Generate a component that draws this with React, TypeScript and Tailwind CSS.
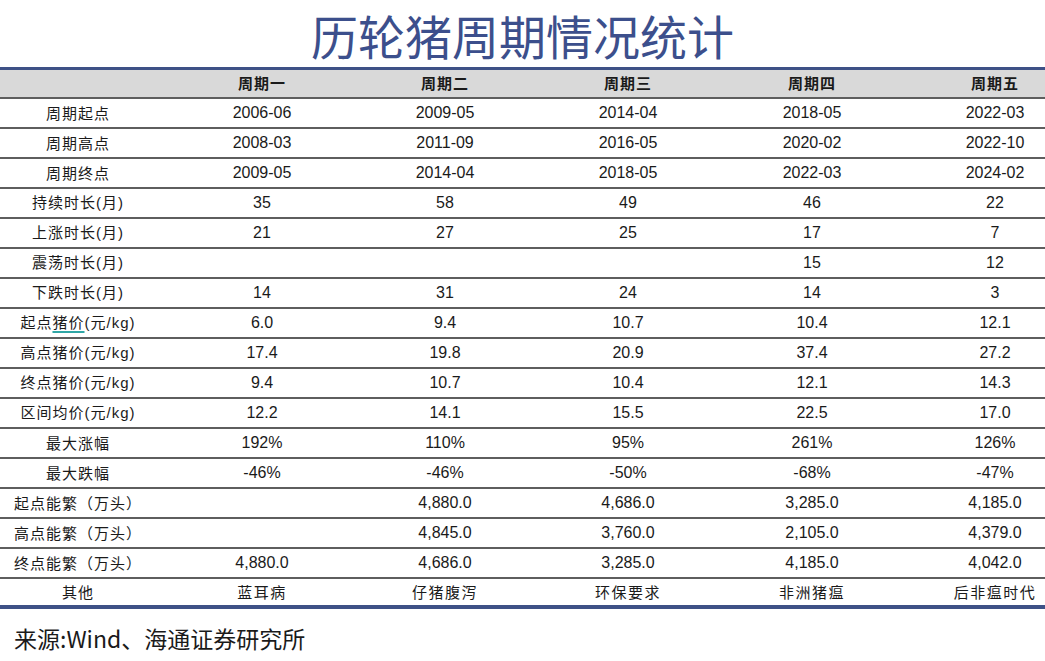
import React from "react";

const cjk = "font-['Noto_Sans_CJK_SC',sans-serif]";
const num = "font-['Liberation_Sans','Noto_Sans_CJK_SC',sans-serif]";

const headers = ["周期一", "周期二", "周期三", "周期四", "周期五"];

const rows: { label: string; values: string[]; cjkValues?: boolean; mark?: boolean }[] = [
  { label: "周期起点", values: ["2006-06", "2009-05", "2014-04", "2018-05", "2022-03"] },
  { label: "周期高点", values: ["2008-03", "2011-09", "2016-05", "2020-02", "2022-10"] },
  { label: "周期终点", values: ["2009-05", "2014-04", "2018-05", "2022-03", "2024-02"] },
  { label: "持续时长(月)", values: ["35", "58", "49", "46", "22"] },
  { label: "上涨时长(月)", values: ["21", "27", "25", "17", "7"] },
  { label: "震荡时长(月)", values: ["", "", "", "15", "12"] },
  { label: "下跌时长(月)", values: ["14", "31", "24", "14", "3"] },
  { label: "起点猪价(元/kg)", values: ["6.0", "9.4", "10.7", "10.4", "12.1"], mark: true },
  { label: "高点猪价(元/kg)", values: ["17.4", "19.8", "20.9", "37.4", "27.2"] },
  { label: "终点猪价(元/kg)", values: ["9.4", "10.7", "10.4", "12.1", "14.3"] },
  { label: "区间均价(元/kg)", values: ["12.2", "14.1", "15.5", "22.5", "17.0"] },
  { label: "最大涨幅", values: ["192%", "110%", "95%", "261%", "126%"] },
  { label: "最大跌幅", values: ["-46%", "-46%", "-50%", "-68%", "-47%"] },
  { label: "起点能繁（万头）", values: ["", "4,880.0", "4,686.0", "3,285.0", "4,185.0"] },
  { label: "高点能繁（万头）", values: ["", "4,845.0", "3,760.0", "2,105.0", "4,379.0"] },
  { label: "终点能繁（万头）", values: ["4,880.0", "4,686.0", "3,285.0", "4,185.0", "4,042.0"] },
  { label: "其他", values: ["蓝耳病", "仔猪腹泻", "环保要求", "非洲猪瘟", "后非瘟时代"], cjkValues: true },
];

// label col + five period columns; last one padded so its text centres where the picture has it
const grid = "grid grid-cols-[170px_184px_182px_184px_184px_141px]";

function Label({ text, mark }: { text: string; mark?: boolean }) {
  if (mark) {
    return (
      <span>
        起点
        <span className="underline decoration-[#2fa6a6] decoration-2 underline-offset-[3px]">猪价</span>
        <span className={num}>(元/kg)</span>
      </span>
    );
  }
  const m = text.match(/^(.*?)(\(.*\))$/);
  if (m) {
    return (
      <span>
        {m[1]}
        <span className={num}>{m[2]}</span>
      </span>
    );
  }
  return <span>{text}</span>;
}

export default function App() {
  return (
    <div className="w-[1045px] h-[661px] bg-white overflow-hidden text-[#1a1a1a]">
      <h1
        className={`${cjk} h-[67px] flex items-center justify-center text-[47px] leading-none text-[#3c4f8c] pt-[2px]`}
      >
        历轮猪周期情况统计
      </h1>

      <div className="border-t-[3px] border-[#3e5186]">
        <div className={`${grid} h-[29px] bg-[#d9d9d9] border-b-2 border-[#5e5e5e] items-center`}>
          <div />
          {headers.map((h, i) => (
            <div
              key={h}
              className={`${cjk} text-center text-[15px] font-bold tracking-[1px] ${i === 4 ? "pl-[41px]" : ""}`}
            >
              {h}
            </div>
          ))}
        </div>

        {rows.map((r, ri) => (
          <div
            key={r.label}
            className={`${grid} items-center ${
              ri === rows.length - 1 ? "h-[26px]" : "h-[30px] border-b-2 border-[#5e5e5e]"
            }`}
          >
            <div className={`${cjk} text-center text-[15px] tracking-[1px] pr-[14px]`}>
              <Label text={r.label} mark={r.mark} />
            </div>
            {r.values.map((v, i) => (
              <div
                key={i}
                className={`text-center ${
                  r.cjkValues ? `${cjk} text-[15px] tracking-[1.5px]` : `${num} text-[16px]`
                } ${i === 4 ? "pl-[41px]" : ""}`}
              >
                {v}
              </div>
            ))}
          </div>
        ))}

        <div className="h-[4px] bg-[#3e5186]" />
      </div>

      <div className={`${cjk} pl-[14px] pt-[18px] text-[23px] leading-none text-[#1a1a1a]`}>
        来源:Wind、海通证券研究所
      </div>
    </div>
  );
}
